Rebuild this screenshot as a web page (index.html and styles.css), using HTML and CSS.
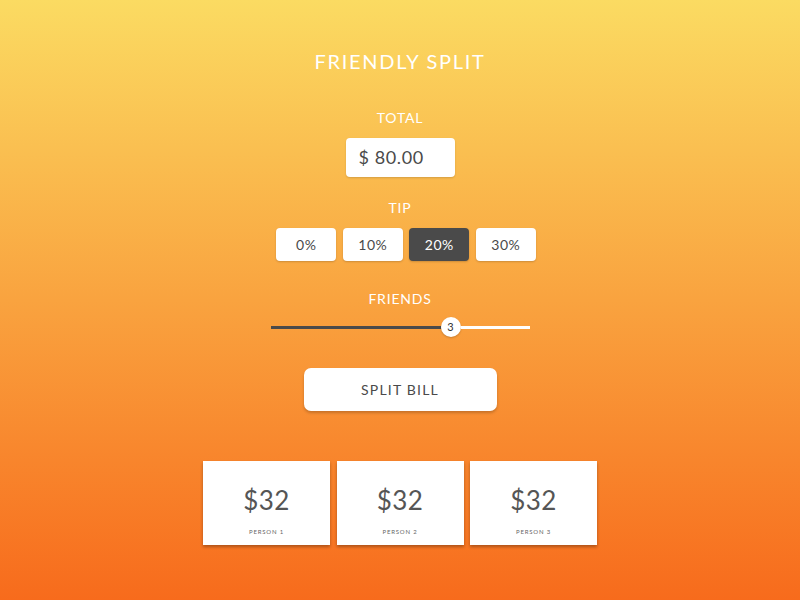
FILE: index.html
```html
<!DOCTYPE html>
<html>
<head>
<meta charset="utf-8">
<link rel="stylesheet" href="styles.css">
</head>
<body>
<main class="app">
  <h1 class="title">FRIENDLY SPLIT</h1>
  <div class="label label-total">TOTAL</div>
  <div class="total-input">$ 80.00</div>
  <div class="label label-tip">TIP</div>
  <div class="tips">
    <button class="tip">0%</button>
    <button class="tip">10%</button>
    <button class="tip active">20%</button>
    <button class="tip">30%</button>
  </div>
  <div class="label label-friends">FRIENDS</div>
  <div class="slider">
    <div class="track-fill"></div>
    <div class="thumb">3</div>
    <div class="track-rest"></div>
  </div>
  <button class="split-btn">SPLIT BILL</button>
  <div class="cards">
    <div class="card"><div class="amount">$32</div><div class="person">PERSON 1</div></div>
    <div class="card"><div class="amount">$32</div><div class="person">PERSON 2</div></div>
    <div class="card"><div class="amount">$32</div><div class="person">PERSON 3</div></div>
  </div>
</main>
</body>
</html>
```
FILE: styles.css
```css
html, body {
  margin: 0;
  padding: 0;
}
body {
  width: 800px;
  height: 600px;
  background: linear-gradient(to bottom, #fbdb62 0%, #f76b1c 100%);
  font-family: "Lato", "Open Sans", sans-serif;
  color: #4a4a4a;
  overflow: hidden;
}
.app {
  display: flex;
  flex-direction: column;
  align-items: center;
  padding-top: 49px;
}
.title {
  margin: 0;
  font-size: 20px;
  line-height: 24px;
  font-weight: 400;
  letter-spacing: 1.7px;
  color: #fff;
}
.label {
  color: #fff;
  font-size: 14px;
  line-height: 16px;
  letter-spacing: 0.8px;
}
.label-total { margin-top: 37px; }
.label-tip { margin-top: 23px; }
.label-friends { margin-top: 30px; }
.total-input {
  margin-top: 12px;
  width: 109px;
  height: 39px;
  box-sizing: border-box;
  padding-left: 13px;
  background: #fff;
  border-radius: 4px;
  font-size: 18px;
  line-height: 39px;
  letter-spacing: 0.6px;
  box-shadow: 0 1px 2px rgba(0,0,0,0.15);
}
.tips {
  margin-top: 12px;
  margin-left: 12px;
  display: flex;
  gap: 6.5px;
}
.tip {
  width: 60px;
  height: 33px;
  border: none;
  border-radius: 4px;
  background: #fff;
  color: #4a4a4a;
  font-family: inherit;
  font-size: 14px;
  letter-spacing: 0.5px;
  padding: 0;
  box-shadow: 0 1px 2px rgba(0,0,0,0.18);
}
.tip.active {
  background: #4a4a4a;
  color: #fff;
}
.slider {
  margin-top: 10px;
  width: 259px;
  height: 20px;
  display: flex;
  align-items: center;
}
.track-fill {
  width: 170px;
  height: 3px;
  background: #4a4a4a;
}
.track-rest {
  flex: 1;
  height: 3px;
  background: #fff;
}
.thumb {
  width: 20px;
  height: 20px;
  border-radius: 50%;
  background: #fff;
  font-size: 11px;
  line-height: 20px;
  text-align: center;
  color: #333;
  box-shadow: 0 1px 2px rgba(0,0,0,0.2);
}
.split-btn {
  margin-top: 31px;
  width: 193px;
  height: 43px;
  border: none;
  border-radius: 7px;
  background: #fff;
  color: #4a4a4a;
  font-family: inherit;
  font-size: 14px;
  letter-spacing: 1.2px;
  box-shadow: 0 2px 3px rgba(0,0,0,0.2);
}
.cards {
  margin-top: 50px;
  display: flex;
  gap: 6.5px;
}
.card {
  width: 127px;
  height: 84px;
  background: #fff;
  display: flex;
  flex-direction: column;
  align-items: center;
  box-shadow: 0 2px 3px rgba(0,0,0,0.3);
}
.amount {
  margin-top: 23px;
  font-size: 26px;
  line-height: 32px;
  letter-spacing: 0.5px;
  color: #555;
}
.person {
  margin-top: 12px;
  font-size: 6px;
  line-height: 8px;
  letter-spacing: 0.8px;
  color: #666;
}
```
